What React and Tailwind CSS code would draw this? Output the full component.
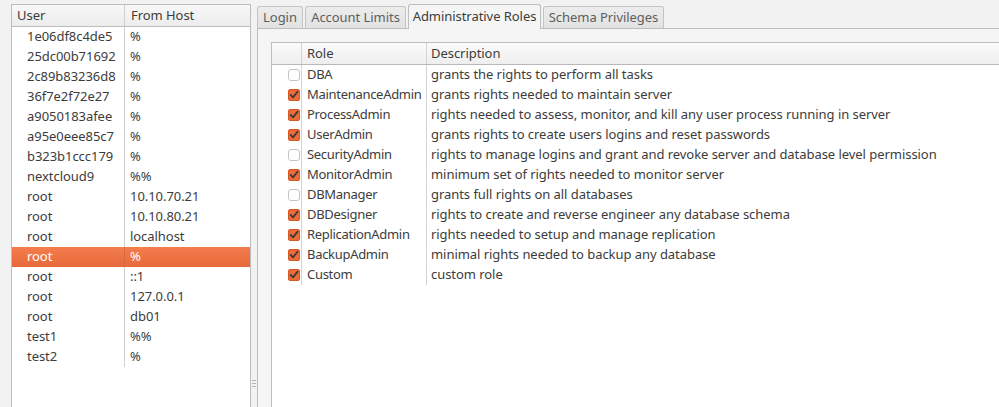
import React from 'react'

const users = [
  ['1e06df8c4de5', '%'],
  ['25dc00b71692', '%'],
  ['2c89b83236d8', '%'],
  ['36f7e2f72e27', '%'],
  ['a9050183afee', '%'],
  ['a95e0eee85c7', '%'],
  ['b323b1ccc179', '%'],
  ['nextcloud9', '%%'],
  ['root', '10.10.70.21'],
  ['root', '10.10.80.21'],
  ['root', 'localhost'],
  ['root', '%'],
  ['root', '::1'],
  ['root', '127.0.0.1'],
  ['root', 'db01'],
  ['test1', '%%'],
  ['test2', '%'],
]

const roles = [
  [false, 'DBA', 'grants the rights to perform all tasks'],
  [true, 'MaintenanceAdmin', 'grants rights needed to maintain server'],
  [true, 'ProcessAdmin', 'rights needed to assess, monitor, and kill any user process running in server'],
  [true, 'UserAdmin', 'grants rights to create users logins and reset passwords'],
  [false, 'SecurityAdmin', 'rights to manage logins and grant and revoke server and database level permission'],
  [true, 'MonitorAdmin', 'minimum set of rights needed to monitor server'],
  [false, 'DBManager', 'grants full rights on all databases'],
  [true, 'DBDesigner', 'rights to create and reverse engineer any database schema'],
  [true, 'ReplicationAdmin', 'rights needed to setup and manage replication'],
  [true, 'BackupAdmin', 'minimal rights needed to backup any database'],
  [true, 'Custom', 'custom role'],
]

// label, width of the tab in px
const tabs = [
  ['Login', 'w-[46px]'],
  ['Account Limits', 'w-[101px]'],
  ['Administrative Roles', 'w-[133px]'],
  ['Schema Privileges', 'w-[121px]'],
]

function Checkbox({ checked }) {
  if (!checked) {
    return <div className="w-[12px] h-[12px] rounded-[3px] border border-[#c4c4c4] bg-white" />
  }
  return (
    <svg width="12" height="12" viewBox="0 0 12 12">
      <rect x="0.5" y="0.5" width="11" height="11" rx="1.5" fill="#ee6a37" stroke="#d4592b" />
      <path d="M2.6 5.8 L5 8.4 L9.6 2.6" fill="none" stroke="#3b3b3b" strokeWidth="1.7" strokeLinecap="round" strokeLinejoin="round" />
    </svg>
  )
}

function UserList() {
  return (
    <div className="w-[240px] flex flex-col bg-white border-l border-r border-t border-[#bdbdbd]">
      <div className="flex h-[22px] border-b border-[#bdbdbd] bg-gradient-to-b from-[#f8f8f8] to-[#ececec]">
        <div className="w-[113px] pl-[5px] flex items-center border-r border-[#d0d0d0]">User</div>
        <div className="flex-1 pl-[6px] flex items-center">From Host</div>
      </div>
      {users.map(([u, h], i) => {
        const sel = i === 11
        return (
          <div
            key={i}
            className={`flex h-[20px] ${sel ? 'bg-gradient-to-b from-[#f37d4d] to-[#e8693a] text-white' : ''}`}
          >
            <div className={`w-[113px] pl-[15px] flex items-center border-r ${sel ? 'border-[#d96a40]' : 'border-[#d0d0d0]'}`}>{u}</div>
            <div className="flex-1 pl-[5px] flex items-center">{h}</div>
          </div>
        )
      })}
    </div>
  )
}

function Splitter() {
  return (
    <div className="w-[6px] flex flex-col justify-end pb-[20px] items-center">
      <div className="flex flex-col gap-[2px]">
        <div className="w-[4px] h-px bg-[#b5b5b5]" />
        <div className="w-[4px] h-px bg-[#b5b5b5]" />
        <div className="w-[4px] h-px bg-[#b5b5b5]" />
      </div>
    </div>
  )
}

function Tabs() {
  return (
    <div className="flex items-end h-[24px] gap-[2px]">
      {tabs.map(([t, w]) => {
        const active = t === 'Administrative Roles'
        return (
          <div
            key={t}
            className={
              active
                ? `${w} h-[25px] -mb-px flex items-center justify-center rounded-t-[3px] border border-b-0 border-[#bdbdbd] bg-[#f5f5f5] text-[#3c3c3c] relative z-10`
                : `${w} h-[22px] flex items-center justify-center rounded-t-[3px] border border-b-0 border-[#c4c4c4] bg-gradient-to-b from-[#ececec] to-[#e2e2e2] text-[#5e5e5e]`
            }
          >
            {t}
          </div>
        )
      })}
    </div>
  )
}

function RolesTable() {
  return (
    <div className="flex-1 flex flex-col bg-white border-l border-t border-[#bdbdbd]">
      <div className="flex h-[22px] border-b border-[#b8b8b8] bg-gradient-to-b from-[#fbfbfb] to-[#eeeeee]">
        <div className="w-[30px] border-r border-[#d4d4d4]" />
        <div className="w-[125px] pl-[5px] flex items-center border-r border-[#d4d4d4]">Role</div>
        <div className="flex-1 pl-[4px] flex items-center">Description</div>
      </div>
      {roles.map(([c, r, d]) => (
        <div key={r} className="flex h-[20px]">
          <div className="w-[30px] pl-[16px] flex items-center border-r border-[#d4d4d4]">
            <Checkbox checked={c} />
          </div>
          <div className="w-[125px] pl-[5px] flex items-center border-r border-[#d4d4d4] whitespace-nowrap overflow-hidden tracking-[-0.3px]">{r}</div>
          <div className="flex-1 pl-[4px] flex items-center whitespace-nowrap">{d}</div>
        </div>
      ))}
    </div>
  )
}

export default function App() {
  return (
    <div
      className="w-[999px] h-[407px] overflow-hidden bg-[#f2f2f2] flex pt-[4px] pl-[11px] text-[13px] tracking-[-0.05px] text-[#3c3c3c]"
      style={{ fontFamily: '"Noto Sans", "DejaVu Sans", sans-serif' }}
    >
      <UserList />
      <Splitter />
      <div className="flex-1 flex flex-col min-w-0">
        <Tabs />
        <div className="flex-1 flex flex-col border-l border-t border-[#bdbdbd] bg-[#f5f5f5] pt-[13px] pl-[13px] min-w-0 overflow-hidden">
          <RolesTable />
        </div>
      </div>
    </div>
  )
}
